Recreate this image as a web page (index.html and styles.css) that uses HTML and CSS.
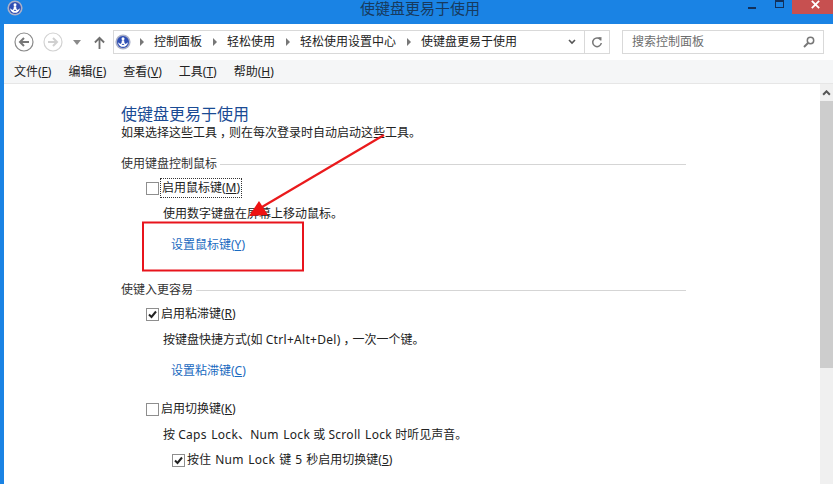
FILE: index.html
```html
<!DOCTYPE html>
<html lang="zh-CN">
<head>
<meta charset="utf-8">
<title>使键盘更易于使用</title>
<link rel="stylesheet" href="styles.css">
</head>
<body>
<div class="window">
  <header class="titlebar">
    <svg class="app-icon" viewBox="0 0 16 16"><use href="#cp"/></svg>
    <div class="title">使键盘更易于使用</div>
    <div class="winbtns">
      <span class="min"></span>
      <span class="max"></span>
      <span class="close"><svg viewBox="0 0 12 12"><path d="M2 2l8 8M10 2l-8 8" stroke="#fff" stroke-width="2"/></svg></span>
    </div>
  </header>
  <div class="inner">
    <div class="toolbar">
      <svg class="nav" viewBox="0 0 20 20"><circle cx="10" cy="10" r="9" fill="#fff" stroke="#8a8a8a" stroke-width="1.2"/><path d="M15 10H6M10 6l-4 4 4 4" fill="none" stroke="#777" stroke-width="2"/></svg>
      <svg class="nav fwd" viewBox="0 0 20 20"><circle cx="10" cy="10" r="9" fill="#fff" stroke="#d2d2d2" stroke-width="1.2"/><path d="M5 10h9M10 6l4 4-4 4" fill="none" stroke="#d0d0d0" stroke-width="2"/></svg>
      <svg class="drop" viewBox="0 0 8 5"><path d="M0 0h8L4 5z" fill="#8a8a8a"/></svg>
      <svg class="up" viewBox="0 0 12 14"><path d="M6 14V2M1 7l5-5 5 5" fill="none" stroke="#6f6f6f" stroke-width="2"/></svg>
      <div class="address">
        <svg class="crumb-icon" viewBox="0 0 16 16">
          <symbol id="cp" viewBox="0 0 16 16">
            <circle cx="8" cy="8" r="7.6" fill="#aab0c8"/>
            <circle cx="8" cy="8" r="6" fill="#2f4fb5"/>
            <path d="M2.800 8.200C4 11.800 6 12.800 8 12.800s4-1 5.200-4.600L10.500 10 9.500 9l-.4-2.800H6.900L6.500 9l-1 1z" fill="#fff"/>
            <circle cx="8" cy="4.800" r="1.500" fill="#fff"/>
            <path d="M6.500 11h3l-1.500-1.500z" fill="#2f4fb5"/>
          </symbol>
          <use href="#cp"/>
        </svg>
        <span class="sep"></span><span class="crumb">控制面板</span>
        <span class="sep"></span><span class="crumb">轻松使用</span>
        <span class="sep"></span><span class="crumb">轻松使用设置中心</span>
        <span class="sep"></span><span class="crumb">使键盘更易于使用</span>
        <span class="fill"></span>
        <svg class="chev" viewBox="0 0 8 6"><path d="M1 1l3 3 3-3" fill="none" stroke="#555" stroke-width="1.600"/></svg>
        <span class="refresh"><svg viewBox="0 0 12 12"><path d="M9.800 4.200A4.300 4.300 0 1 0 10.300 7" fill="none" stroke="#777" stroke-width="1.500"/><path d="M7 1l3.600 0.200-0.400 3.800z" fill="#777"/></svg></span>
      </div>
      <div class="search">
        <span>搜索控制面板</span>
        <svg viewBox="0 0 12 12"><circle cx="7.500" cy="4.500" r="3.200" fill="none" stroke="#777" stroke-width="1.500"/><path d="M5 7l-4 4" stroke="#777" stroke-width="2"/></svg>
      </div>
    </div>
    <nav class="menu">
      <span>文件(<u>F</u>)</span><span>编辑(<u>E</u>)</span><span>查看(<u>V</u>)</span><span>工具(<u>T</u>)</span><span>帮助(<u>H</u>)</span>
    </nav>
    <main class="content">
      <div class="scroll">
        <div class="arrow"><svg viewBox="0 0 8 5"><path d="M1 4l3-3 3 3" fill="none" stroke="#555" stroke-width="1.800"/></svg></div>
        <div class="thumb"></div>
      </div>
      <div class="page">
        <h1>使键盘更易于使用</h1>
        <p class="intro">如果选择这些工具<span class="fw">，</span>则在每次登录时自动启动这些工具。</p>
        <div class="group"><span>使用键盘控制鼠标</span><i></i></div>
        <label class="check first"><b class="box"></b><span class="focus">启用鼠标键(<u>M</u>)</span></label>
        <p class="desc d1">使用数字键盘在屏幕上移动鼠标。</p>
        <a class="link l1">设置鼠标键(<u>Y</u>)</a>
        <div class="group g2"><span>使键入更容易</span><i></i></div>
        <label class="check second"><b class="box on"><svg viewBox="0 0 11 11"><path d="M2 5.500l2.500 2.500L9 2.500" fill="none" stroke="#222" stroke-width="2"/></svg></b><span>启用粘滞键(<u>R</u>)</span></label>
        <p class="desc d2">按键盘快捷方式(如 <span class="lat">Ctrl+Alt+Del</span>)<span class="fw">，</span>一次一个键。</p>
        <a class="link l2">设置粘滞键(<u>C</u>)</a>
        <label class="check third"><b class="box"></b><span>启用切换键(<u>K</u>)</span></label>
        <p class="desc d3">按 <span class="lat">Caps Lock</span>、<span class="lat">Num Lock</span> 或 <span class="lat">Scroll Lock</span> 时听见声音。</p>
        <label class="check sub"><b class="box on"><svg viewBox="0 0 11 11"><path d="M2 5.500l2.500 2.500L9 2.500" fill="none" stroke="#222" stroke-width="2"/></svg></b><span>按住 <span class="lat">Num Lock</span> 键 5 秒启用切换键(<u>5</u>)</span></label>
      </div>
    </main>
  </div>
  <svg class="annot" viewBox="0 0 833 484">
    <rect x="143" y="222.500" width="160" height="48" fill="none" stroke="#e8141c" stroke-width="2"/>
    <path d="M384 135L262 207" stroke="#ea1a1c" stroke-width="2.200"/>
    <path d="M249 216l10-15 9 14z" fill="#ee1111"/>
  </svg>
</div>
</body>
</html>
```
FILE: styles.css
```css
* { box-sizing: border-box; }
html, body { margin: 0; height: 100%; overflow: hidden; }
body { font: 12px/16px "Noto Sans", "Noto Sans CJK SC", sans-serif; color: #222; }
.window { position: relative; width: 833px; height: 484px; background: #1a83e4; display: flex; flex-direction: column; overflow: hidden; }
.titlebar { height: 24px; flex: none; display: flex; position: relative; }
.app-icon { width: 16px; height: 16px; margin: 0 0 0 7px; }
.title { position: absolute; left: 360px; top: 0; font: 15px/18px "Liberation Sans", "Noto Sans CJK SC", sans-serif; color: #173a5e; }
.winbtns { margin-left: auto; display: flex; align-items: flex-start; }
.min { width: 8px; height: 2px; margin: 7px 0 0; background: #12305a; }
.max { width: 9px; height: 8px; margin: 0 0 0 19px; border: 1px solid #12305a; border-top-width: 2px; }
.close { width: 41px; height: 14px; margin-left: 8px; background: #c75050; display: flex; justify-content: center; padding-left: 5px; }
.close svg { width: 11px; height: 11px; margin-top: -1px; }
.inner { flex: 1; margin-left: 4px; background: #fff; display: flex; flex-direction: column; min-height: 0; }
.toolbar { height: 36px; flex: none; display: flex; align-items: center; }
.nav { width: 20px; height: 20px; margin-left: 10px; flex: none; }
.nav.fwd { margin-left: 9px; }
.drop { width: 8px; height: 5px; margin-left: 10px; flex: none; }
.up { width: 11px; height: 13px; margin-left: 13px; flex: none; }
.address { width: 497px; height: 24px; margin-left: 8px; border: 1px solid #d9d9d9; display: flex; align-items: center; padding-left: 1px; flex: none; }
.crumb-icon { width: 16px; height: 16px; flex: none; }
.sep { width: 0; height: 0; border-left: 4px solid #777; border-top: 4px solid transparent; border-bottom: 4px solid transparent; margin: 0 10px 0 11px; }
.address .sep:first-of-type { margin-left: 9px; }
.crumb { color: #222; }
.fill { flex: 1; }
.chev { width: 8px; height: 6px; margin-right: 8px; }
.refresh { width: 25px; height: 22px; border-left: 1px solid #d9d9d9; display: flex; align-items: center; justify-content: center; }
.refresh svg { width: 12px; height: 12px; }
.search { width: 202px; height: 24px; margin-left: 12px; border: 1px solid #d9d9d9; display: flex; align-items: center; justify-content: space-between; padding: 0 8px 0 9px; color: #6d6d6d; flex: none; }
.search svg { width: 12px; height: 12px; }
.menu { height: 24px; flex: none; background: #f5f6f7; border-bottom: 1px solid #e6e6e6; display: flex; gap: 17px; padding: 1px 0 0 10px; align-items: center; }
.content { flex: 1; position: relative; min-height: 0; }
.scroll { position: absolute; right: 0; top: 0; bottom: 0; width: 13px; background: #f0f0f0; }
.arrow { height: 17px; display: flex; justify-content: center; padding-top: 6px; }
.arrow svg { width: 9px; height: 6px; }
.thumb { height: 267px; background: #cdcdcd; }
.page { padding: 20px 0 0 117px; width: 682px; }
h1 { margin: 0 0 1px; font-size: 16px; line-height: 20px; font-weight: 400; color: #1a4b94; }
.intro { margin: 0; line-height: 16px; }
.fw { font-feature-settings: "halt"; padding: 0 3px; }
.lat { letter-spacing: 0.3px; word-spacing: 1px; }
.group { display: flex; align-items: center; gap: 3px; color: #333; margin-top: 15px; }
.group i { flex: 1; height: 1px; background: #d5d5d5; }
.group.g2 { margin-top: 29px; }
.check { display: flex; align-items: center; gap: 2px; margin-left: 25px; }
.box { width: 13px; height: 13px; border: 1px solid #8e8e8e; background: #fff; flex: none; display: block; }
.box svg { width: 11px; height: 11px; display: block; }
.first { margin-top: 7px; }
.focus { outline: 1px dotted #333; padding: 1px; }
.second { margin-top: 8px; }
.third { margin-top: 22px; }
.sub { margin: 9px 0 0 51px; word-spacing: 1px; }
.desc { margin: 0 0 0 42px; }
.d1 { margin-top: 9px; }
.d2 { margin-top: 10px; }
.d3 { margin-top: 10px; }
.link { display: block; margin-left: 50px; color: #1a6ac0; margin-top: 15px; }
.annot { position: absolute; left: 0; top: 0; width: 833px; height: 484px; pointer-events: none; }
```
